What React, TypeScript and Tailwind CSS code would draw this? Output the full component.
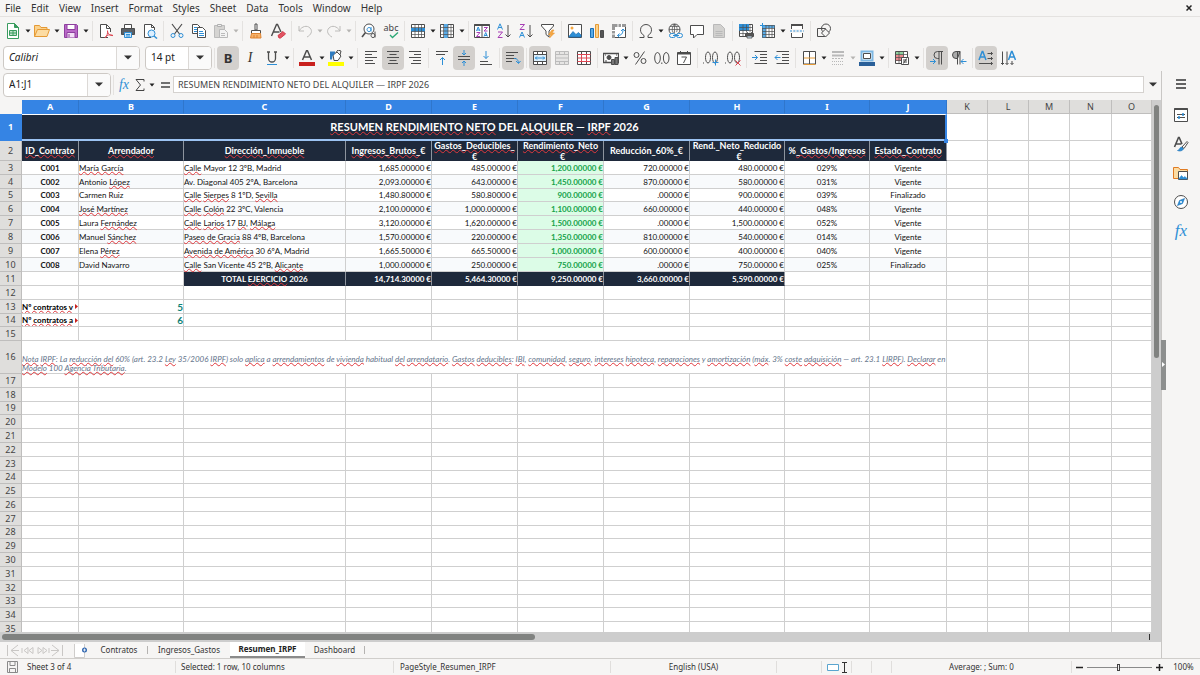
import type { ReactNode } from "react";

const ink = "#4d4d4d";
const blue = "#2e8fd6";

type IconProps = { children: ReactNode; w?: number };

function Svg({ children, w = 16 }: IconProps) {
  return (
    <svg width={w} height="16" viewBox={`0 0 ${w} 16`} fill="none" stroke={ink} strokeWidth="1" aria-hidden="true" className="shrink-0">
      {children}
    </svg>
  );
}

const icons: Record<string, ReactNode> = {
  newDoc: (
    <Svg>
      <path d="M2.5.5h7l4 4v11h-11z" fill="#fff" stroke="#3a9c5f" />
      <path d="M9.5.5v4h4z" fill="#3a9c5f" stroke="#3a9c5f" />
      <path d="M4.5 7.5h7v5h-7zM4.5 10h7M8 7.5v5" stroke="#3a9c5f" fill="#bfe3cb" />
    </Svg>
  ),
  open: (
    <Svg>
      <path d="M.5 13.500v-11h5l1.5 2h6v2" fill="#fbd28c" stroke="#e59a35" />
      <path d="M.5 13.500l3-7h12l-2.500 7z" fill="#fcdca3" stroke="#e59a35" />
    </Svg>
  ),
  save: (
    <Svg>
      <path d="M1.5 1.5h12l1 1v12h-13z" fill="#b968c7" stroke="#8e3f9e" />
      <path d="M4 1.5h8v5H4z" fill="#fff" stroke="#8e3f9e" />
      <path d="M4 14.5v-5h8v5" fill="#f3dff6" stroke="#8e3f9e" />
      <path d="M6 11v3" stroke="#8e3f9e" />
    </Svg>
  ),
  pdf: (
    <Svg>
      <path d="M10 14.5H2.5v-13h6l4 4V9" fill="#fff" />
      <path d="M8.5 1.5v4h4" />
      <path d="M7 15c2-2 3-5 2.5-7.500M9.5 8c0 3 3 5 5.500 4.500M7 15c1-3 5-4 8-2.500" stroke="#dd4652" />
    </Svg>
  ),
  print: (
    <Svg>
      <path d="M4.5 6V1.5h7V6" fill="#fff" />
      <path d="M1.5 5.500h13v6h-13z" fill="#5a6066" />
      <path d="M4.5 9.5h7v5h-7z" fill="#cfe6f7" stroke={blue} />
      <path d="M6 11.500h4M6 13h4" stroke={blue} />
    </Svg>
  ),
  preview: (
    <Svg>
      <path d="M9 14.5H2.5v-13h7l3 3V7" fill="#fff" />
      <path d="M9.5 1.5v3h3" />
      <circle cx="9.5" cy="10.5" r="3.5" fill="#dcefff" stroke={blue} />
      <path d="M12 13l3 2.5" stroke={blue} strokeWidth="1.5" />
    </Svg>
  ),
  cut: (
    <Svg>
      <path d="M3 1l7.5 10M13 1L5.5 11" strokeWidth="1.2" />
      <circle cx="4" cy="12.5" r="2" stroke={blue} />
      <circle cx="12" cy="12.5" r="2" stroke={blue} />
    </Svg>
  ),
  copy: (
    <Svg>
      <path d="M1.5 1.5h5l3 3v6h-8z" fill="#fff" />
      <path d="M3 4.5h3M3 6.5h3M3 8.5h3" stroke={blue} />
      <path d="M6.5 4.5h5l3 3v7h-8z" fill="#fff" />
      <path d="M8 8.5h4M8 10.5h5M8 12.5h5" stroke={blue} />
    </Svg>
  ),
  paste: (
    <Svg>
      <path d="M1.5 2.5h10v12h-10z" fill="#d5d4d2" stroke="#bbb" />
      <path d="M4.5 1.5h4v2h-4z" fill="#eee" stroke="#b0b0b0" />
      <path d="M6.5 6.5h5l3 3v5h-8z" fill="#f3f3f3" stroke="#b9b9b9" />
      <path d="M8 10.5h4M8 12.5h4" stroke="#bbb" />
    </Svg>
  ),
  clone: (
    <Svg>
      <path d="M7 1h2v6H7z" fill="#fff" />
      <path d="M3.5 7.5h9v3h-9z" fill="#fff" />
      <path d="M3.5 10.5h9l.5 4.5H2.5z" fill="#f6b26b" stroke="#df8330" />
      <path d="M6 12v3M9 12v3" stroke="#df8330" />
    </Svg>
  ),
  clear: (
    <Svg>
      <path d="M1.5 13L6.5 1.5h1L11 9M3.5 9h6" strokeWidth="1.4" />
      <path d="M8 12.5l5-4 2.5 2.5-5 4H9z" fill="#e25563" stroke="#d23b4b" />
    </Svg>
  ),
  undo: (
    <Svg>
      <path d="M2 3v5h5M2 8c3-5 8-6 11-3s1 7-3 9" stroke="#bdbcba" />
    </Svg>
  ),
  redo: (
    <Svg>
      <path d="M14 3v5H9M14 8C11 3 6 2 3 5s-1 7 3 9" stroke="#bdbcba" />
    </Svg>
  ),
  find: (
    <Svg>
      <circle cx="8" cy="6" r="5" fill="#fff" />
      <path d="M4.5 9.5L1 14" strokeWidth="1.6" />
      <path d="M10 4v4.5M10 6.5a2 2 0 1 0 0 .1" stroke={blue} />
      <path d="M14 8.5v6M14 12.5a2 2 0 1 0 0 .1" />
    </Svg>
  ),
  rows: (
    <Svg>
      <path d="M1.5 1.5h13v13h-13z" fill="#fff" />
      <path d="M1 5h14v3.5H1z" fill={blue} stroke="none" />
      <path d="M1.5 4.5h13M1.5 8.5h13M1.5 11.5h13M5 1.5v13M8.5 1.5v13M11.5 1.5v13" strokeWidth=".7" />
    </Svg>
  ),
  cols: (
    <Svg>
      <path d="M1.5 1.5h13v13h-13z" fill="#fff" />
      <path d="M5 1h4v14H5z" fill="#5aabe6" stroke="none" />
      <path d="M1.5 4.5h13M1.5 8h13M1.5 11.5h13M4.5 1.5v13M9 1.5v13M12 1.5v13" strokeWidth=".7" />
    </Svg>
  ),
  sort: (
    <Svg>
      <path d="M.5 1.5h15v13H.5zM8 1.5v13" fill="#fff" />
      <path d="M.5 2h15" strokeWidth="2" />
      <path d="M2.5 8l1.7-4 1.7 4M3 7h2.4M10 13.5l1.7-4 1.7 4M10.5 12.5H13" stroke={blue} />
      <path d="M2.5 9.5h3.5l-3.5 4H6M10 4.5h3.5L10 8h3.5" stroke="#a73fb5" />
    </Svg>
  ),
  sortAsc: (
    <Svg>
      <path d="M1.5 6.5L4 .8l2.5 5.7M2.3 4.5h3.4" stroke={blue} />
      <path d="M2 9h4.5L2 14.5h4.5" stroke="#a73fb5" />
      <path d="M12 2v12M9.5 11.5L12 14l2.5-2.5" />
    </Svg>
  ),
  sortDesc: (
    <Svg>
      <path d="M2 1.5h4.5L2 6.5h4.5" stroke="#a73fb5" />
      <path d="M1.5 14.5L4 9l2.5 5.5M2.3 12.5h3.4" stroke={blue} />
      <path d="M12 2v12M9.5 11.5L12 14l2.5-2.5" />
    </Svg>
  ),
  filter: (
    <Svg>
      <path d="M1.5 1.5h12V3L9 8v6l-3-2.5V8L1.5 3z" fill="#fff" />
      <path d="M12 7l-3.5 4.5H11L9.5 15l5-5H12l2-3z" fill="#f5a742" stroke="#e9962f" strokeWidth=".6" />
    </Svg>
  ),
  image: (
    <Svg>
      <path d="M1.5 1.5h13v13h-13z" fill="#fff" />
      <path d="M2 13.500l4-5 3 3 2.500-2L14 12v2H2z" fill={blue} stroke="#1a6fb5" strokeWidth=".7" />
      <circle cx="5" cy="5" r="1.5" fill="#f5a742" stroke="none" />
    </Svg>
  ),
  chart: (
    <Svg>
      <path d="M1.5 5.5h3v9h-3z" fill="#5aabe6" stroke="#1a6fb5" />
      <path d="M6.5 1.5h3v13h-3z" fill="#fbd28c" stroke="#e59a35" />
      <path d="M11.5 7.5h3v7h-3z" fill="#555" />
    </Svg>
  ),
  pivot: (
    <Svg>
      <path d="M1.5 1.5h13v13h-13z" fill="#fff" />
      <path d="M1 1h14v3H1zM1 4h3v11H1z" fill="#999" stroke="none" />
      <path d="M7 1v3M10.5 1v3M1 7.5h3M1 11h3" stroke="#fff" />
      <path d="M6.5 12.5c4 0 5.5-2 5.5-6M10 8l2-2 2 2M8.5 10.5l-2 2 2 2" stroke={blue} />
    </Svg>
  ),
  omega: (
    <Svg>
      <path d="M1.5 14.5H6v-2C3.5 11 2.5 9 2.5 6.8 2.5 3.7 5 1.5 8 1.5s5.5 2.200 5.500 5.300C13.5 9 12.5 11 10 12.500v2h4.500" />
    </Svg>
  ),
  link: (
    <Svg>
      <circle cx="7.5" cy="6.5" r="5.5" />
      <path d="M2 6.5h11M7.5 1v9M3 3.5h9M7.5 1c-3 3-3 8 0 10M7.5 1c3 3 3 6 2 8" strokeWidth=".7" />
      <rect x="2.5" y="10.5" width="6" height="4" rx="2" fill="#f6f5f4" stroke={blue} />
      <rect x="9.5" y="10.5" width="6" height="4" rx="2" fill="#f6f5f4" stroke={blue} />
      <path d="M6 12.5h6" stroke={blue} />
    </Svg>
  ),
  comment: (
    <Svg>
      <path d="M1.5 2.5h13v9H8L4.5 15v-3.5h-3z" fill="#fff" />
    </Svg>
  ),
  header: (
    <Svg>
      <path d="M2.5 1.5h7l4 4v9h-11z" fill="#d2d1cf" stroke="#b9b9b9" />
      <path d="M4.5 8.5h7M4.5 10.5h7M4.5 12.5h7" stroke="#b9b9b9" />
    </Svg>
  ),
  printArea: (
    <Svg>
      <path d="M1.5 1.5h13v12h-13z" fill="#fff" />
      <path d="M1 1h10v7H1z" fill={blue} stroke="none" />
      <path d="M1.5 4.5h13M1.5 7.5h13M1.5 10.5h6M5 1.5v12M8.5 1.5v8M12 1.5v8" strokeWidth=".7" />
      <path d="M7.5 10.5h8v3h-8z" fill="#555" />
      <path d="M9.5 9v2M13.5 9v2M9 13h5v2H9z" fill="#cfe6f7" strokeWidth=".8" />
    </Svg>
  ),
  freeze: (
    <Svg>
      <path d="M2.5 2.5h12v12h-12z" fill="#fff" />
      <path d="M2 2h13v3H2zM2 5h4v10H2z" fill="#5aabe6" stroke="none" />
      <path d="M2.5 5.5h12M2.5 8.5h12M2.5 11.5h12M6 2.5v12M9 2.5v12M12 2.5v12M2.5 2.5h12v12h-12z" strokeWidth=".7" />
      <path d="M2.5 0v5M0 2.5h5" stroke={blue} />
    </Svg>
  ),
  split: (
    <Svg>
      <path d="M2.5 6V1.5h11V6M2.5 10v4.5h11V10" fill="#fff" />
      <path d="M2 2h12" strokeWidth="2" />
      <path d="M1 8h14" stroke={blue} strokeDasharray="2 1.3" />
    </Svg>
  ),
  shapes: (
    <Svg>
      <circle cx="10" cy="5.5" r="4.5" />
      <path d="M1.5 5.5h8v8h-8z" />
      <path d="M9.5 6l4 4-4 4-4-4z" fill="#f6f5f4" />
    </Svg>
  ),
  bold: <span className="font-['Noto_Sans'] text-[13px] leading-4 font-bold text-[#333]">B</span>,
  italic: <span className="font-['Liberation_Serif'] text-[14px] leading-4 text-[#333] italic">I</span>,
  underline: (
    <Svg>
      <path d="M4.5 2v6.500a3.500 3.500 0 0 0 7 0V2M3 2h3M10 2h3" strokeWidth="1.3" />
      <path d="M3 14.5h10" stroke={blue} />
    </Svg>
  ),
  fontColor: (
    <Svg>
      <path d="M3.5 10L7.500.8h1L12.500 10M5 7h6" strokeWidth="1.5" />
      <path d="M0 12h16v4H0z" fill="#c9211e" stroke="none" />
    </Svg>
  ),
  highlight: (
    <Svg>
      <path d="M5 5l4-3 4 4-3 4.500H6z" fill="#fff" />
      <path d="M8 2.500L10 0l3 1-1 4" />
      <path d="M2 1.500h5v2L4.500 6l-.5 3.500H2z" fill="#2f7cc0" stroke="none" />
      <path d="M0 12h16v4H0z" fill="#ff0" stroke="none" />
    </Svg>
  ),
  left: (
    <Svg>
      <path d="M2 1.500h12M2 4.500h7M2 7.500h12M2 10.500h8M2 13.500h10" />
    </Svg>
  ),
  center: (
    <Svg>
      <path d="M2 1.500h12M4.500 4.500h7M2 7.500h12M4.500 10.500h7M3 13.500h10" />
    </Svg>
  ),
  right: (
    <Svg>
      <path d="M2 1.500h12M7 4.500h7M2 7.500h12M6 10.500h8M4 13.500h10" />
    </Svg>
  ),
  top: (
    <Svg>
      <path d="M2 1.500h12M2 4.500h9" />
      <path d="M8.500 15V7.500M6 10l2.500-2.500L11 10" stroke={blue} />
    </Svg>
  ),
  middle: (
    <Svg>
      <path d="M2 6.500h12M2 9.500h12" />
      <path d="M8 0v5M6 3l2 2 2-2M8 16v-5M6 13l2-2 2 2" stroke={blue} />
    </Svg>
  ),
  bottom: (
    <Svg>
      <path d="M2 11.500h8M2 14.500h12" />
      <path d="M8 1v7.500M5.500 6L8 8.500 10.500 6" stroke={blue} />
    </Svg>
  ),
  wrap: (
    <Svg>
      <path d="M1 2.500h12M1 5.500h8M1 8.500h10M1 11.500h6" />
      <path d="M9 8.500c3 0 4 1 4.500 4.500M11 11l2.500 2.500L15.500 11" stroke={blue} />
    </Svg>
  ),
  mergeCenter: (
    <Svg>
      <path d="M1.500 1.500h13v13h-13zM1.500 4.500h13M1.500 11.500h13M5.500 1.500v3M10.500 1.500v3M5.500 11.500v3M10.500 11.500v3" fill="#fff" />
      <path d="M2 5h12v6H2z" fill="#dbeefb" stroke="none" />
      <path d="M3 8h10M5 6.500L3.500 8 5 9.500M11 6.500L12.500 8 11 9.500" stroke={blue} />
    </Svg>
  ),
  merge: (
    <Svg>
      <path
        d="M1.500 1.500h13v13h-13zM1.500 4.500h13M1.500 8h13M1.500 11.500h13M5.500 1.500v3M10.500 1.500v3M5.500 11.500v3M10.500 11.500v3"
        stroke="#bcbcbc"
        fill="#e6e5e4"
      />
    </Svg>
  ),
  unmerge: (
    <Svg>
      <path d="M1.500 1.500h13v13h-13zM5.500 1.500v3M10.500 1.500v3M5.500 11.500v3M10.500 11.500v3" fill="#fff" />
      <path d="M1.500 4.500h13M1.500 8h13M1.500 11.500h13M5.500 4.500v7M10.500 4.500v7" stroke="#dd4652" />
    </Svg>
  ),
  currency: (
    <Svg>
      <path d="M.5 3.500h15v9H.5z" fill="#fff" strokeWidth="1.3" />
      <circle cx="6" cy="7.5" r="2" fill={ink} />
      <path d="M8.500 9.500h3v5h-3zM12 7.500h3v7h-3z" fill="#777" />
      <path d="M2 5h1M13 5h1M2 11h2" />
    </Svg>
  ),
  percent: (
    <Svg>
      <circle cx="4.5" cy="5" r="2.5" />
      <circle cx="11.5" cy="11" r="2.5" />
      <path d="M12.500 1.500l-9 13" />
    </Svg>
  ),
  number: (
    <Svg>
      <ellipse cx="3.5" cy="8" rx="2.8" ry="5.5" />
      <ellipse cx="12.2" cy="8" rx="2.8" ry="5.5" />
      <path d="M7.800 12.500v1.500" />
    </Svg>
  ),
  date: (
    <Svg>
      <path d="M1.500 2.500h13v12h-13z" fill="#fff" />
      <path d="M1.500 3.500h13" strokeWidth="2" />
      <path d="M4.500 1v2M11.500 1v2M5.500 7h5l-3 6" />
    </Svg>
  ),
  addDecimal: (
    <Svg>
      <path d="M.5 12.500v1" />
      <ellipse cx="5" cy="7.5" rx="2.5" ry="5.5" />
      <ellipse cx="12" cy="7.5" rx="2.5" ry="5.5" />
      <path d="M12.500 9.500v6M9.500 12.500h6" stroke={blue} />
    </Svg>
  ),
  delDecimal: (
    <Svg>
      <path d="M.5 12.500v1" />
      <ellipse cx="5" cy="7.5" rx="2.5" ry="5.5" />
      <ellipse cx="12" cy="7.5" rx="2.5" ry="5.5" />
      <path d="M10.500 10.500l5 5M15.500 10.500l-5 5" stroke="#dd4652" />
    </Svg>
  ),
  indent: (
    <Svg>
      <path d="M2.500 1.500H15M8 4.500h7M8 7.500h7M8 10.500h7M2.500 13.500H15" />
      <path d="M0 7.500h5.500M3 5l2.500 2.500L3 10" stroke={blue} />
    </Svg>
  ),
  outdent: (
    <Svg>
      <path d="M2.500 1.500H15M8 4.500h7M8 7.500h7M8 10.500h7M2.500 13.500H15" />
      <path d="M6.500 7.500H1M3.500 5L1 7.500 3.500 10" stroke={blue} />
    </Svg>
  ),
  borders: (
    <Svg>
      <path d="M2.500 14.500h12" stroke="#e59a35" />
      <path d="M2.500 1.500h12v12.500h-12zM8.500 1.500v12.500" fill="#fff" />
      <path d="M3 8h11M3 14.500h11" stroke="#e59a35" />
    </Svg>
  ),
  lineStyle: (
    <Svg>
      <path d="M2 2h12M2 5.500h12" stroke="#b9b9b9" strokeWidth="2" />
      <path d="M2 8.500h12" stroke="#b9b9b9" strokeDasharray="2 1" />
      <path d="M2 11.500h12M2 14.500h12" stroke="#b9b9b9" strokeDasharray="1 1" />
    </Svg>
  ),
  borderColor: (
    <Svg>
      <path d="M2.500 1.500h11v9h-11z" fill="#fff" stroke="#7db8e4" strokeWidth="2" />
      <path d="M4.500 3.500h7v5h-7z" />
      <path d="M0 12h16v4H0z" fill="#2a6099" stroke="none" />
    </Svg>
  ),
  conditional: (
    <Svg>
      <path d="M1.500 1.500h12v12h-12z" fill="#fff" />
      <path d="M2 2h8v3H2z" fill="#8fd19e" stroke="none" />
      <path d="M2 5h8v6H2z" fill="#ee8a8f" stroke="none" />
      <path d="M1.500 4.500h12M1.500 7.500h12M1.500 10.500h12M5 1.500v12M9.500 1.500v12" strokeWidth=".7" />
      <path d="M7.500 7.500h7v7h-7z" fill="#fff" />
      <path d="M9 10h4M9 12h4M12.500 8.500l-3 5" />
    </Svg>
  ),
  ltr: (
    <Svg>
      <path d="M14 1.500H8.500a3.500 3.500 0 0 0 0 7H10M10 1.500v13M12.500 1.500v13" />
      <path d="M1 11.500h5.500M4 9l2.500 2.500L4 14" stroke={blue} />
    </Svg>
  ),
  rtl: (
    <Svg>
      <path d="M9 1.500H5a3.500 3.500 0 0 0 0 7h1.500z" fill="#aaa" />
      <path d="M6.500 1.500v13M9 1.500v13" />
      <path d="M15.500 11.500H10M12.500 9L10 11.500l2.500 2.500" stroke={blue} />
    </Svg>
  ),
  horizontal: (
    <Svg>
      <path d="M1 10L4.200 1.500h.6L8 10M2 7h5" stroke={blue} strokeWidth="1.5" />
      <path d="M9.500 3.500h5M13 2l1.500 1.500L13 5M9.500 8.500h5M13 7l1.500 1.500L13 10M1 13.500h13.500M13 12l1.500 1.500L13 15" />
    </Svg>
  ),
  vertical: (
    <Svg>
      <path d="M8.500 10l3-8.500h.6L15.500 10M9.500 7h5" stroke={blue} strokeWidth="1.5" />
      <path d="M2.500 1.500v13M1 13l1.500 1.500L4 13M7 1.500v13M5.500 13L7 14.500 8.500 13M12 11v3.500M10.500 13l1.500 1.500 1.500-1.500" />
    </Svg>
  ),
  menu: (
    <Svg>
      <path d="M3 4h10M3 8h10M3 12h10" stroke="#333" strokeWidth="1.5" />
    </Svg>
  ),
  properties: (
    <Svg>
      <path d="M1.500 1.500h13v13h-13z" fill="#fff" />
      <path d="M1.500 2h13" strokeWidth="2" />
      <path d="M4 7.500h8M4 10.500h8" />
      <path d="M10 6v3M6 9v3" stroke={blue} strokeWidth="1.5" />
    </Svg>
  ),
  styles: (
    <Svg>
      <path d="M1.500 11L5.500 1.500h.7L9 8M3 8h5.500" strokeWidth="1.6" />
      <path d="M9 11l5-5.500 1 1-4 6z" fill="#fff" />
      <path d="M4.500 14.500c2 0 2-3 4-3.500l2 2c-1 2-4 2.500-6 1.500z" fill={blue} stroke="#1a6fb5" strokeWidth=".6" />
    </Svg>
  ),
  gallery: (
    <Svg>
      <path d="M.5 13.500v-11h5l1.500 2h7.500v9z" fill="#fcdca3" stroke="#e07b22" />
      <path d="M5.500 6.500h9v8h-9z" fill="#fff" />
      <path d="M6 13.500l2.500-3 2 2 1.500-1 2 2v.5H6z" fill={blue} stroke={blue} strokeWidth=".5" />
    </Svg>
  ),
  navigator: (
    <Svg>
      <circle cx="8" cy="8" r="6.5" fill="#fff" />
      <path d="M11.500 4.500L9.500 9.500l-5 2 2-5z" fill={blue} stroke="#1a6fb5" strokeWidth=".6" />
      <circle cx="8" cy="8" r="1" fill="#fff" stroke="none" />
    </Svg>
  ),
};

icons.spelling = (
  <span className="relative block h-4 w-4 text-center font-['Noto_Sans'] text-[9px] leading-[9px] text-[#444]">
    <span className="-mx-1 block">abc</span>
    <svg width="10" height="7" viewBox="0 0 10 7" fill="none" stroke="#2aa876" strokeWidth="1.3" className="absolute right-0 bottom-0" aria-hidden="true">
      <path d="M1 3l2.500 2.500L9 .5" />
    </svg>
  </span>
);

function Caret({ faded = false }: { faded?: boolean }) {
  return (
    <svg width="6" height="4" viewBox="0 0 6 4" aria-hidden="true" className={faded ? "text-[#b5b4b2]" : "text-[#222]"}>
      <path d="M.5.5h5L3 3.500z" fill="currentColor" />
    </svg>
  );
}

function Tool({ id, label, active = false }: { id: string; label: string; active?: boolean }) {
  return (
    <button
      type="button"
      aria-label={label}
      aria-pressed={active}
      className={`flex h-6 w-[22px] shrink-0 items-center justify-center rounded ${active ? "bg-[#d3d0cd]" : ""}`}
    >
      {icons[id]}
    </button>
  );
}

function Drop({ label, faded }: { label: string; faded?: boolean }) {
  return (
    <button type="button" aria-label={`${label} options`} className="flex h-6 w-[7px] shrink-0 items-center justify-end">
      <Caret faded={faded} />
    </button>
  );
}

type ToolDef = { id: string; label: string; active?: boolean; drop?: boolean; faded?: boolean };

function Toolbar({ groups }: { groups: ToolDef[][] }) {
  return (
    <>
      {groups.map((group, i) => (
        <div key={i} className="flex shrink-0 items-center">
          {i > 0 && (
            <span className="flex w-[5px] justify-center">
              <span className="h-5 w-px bg-[#e4e2e0]" />
            </span>
          )}
          {group.map((t) => (
            <div key={t.id} className="flex items-center">
              <Tool id={t.id} label={t.label} active={t.active} />
              {t.drop && <Drop label={t.label} faded={t.faded} />}
            </div>
          ))}
          {group[group.length - 1].drop && <span className="w-px" />}
        </div>
      ))}
    </>
  );
}

const standardTools: ToolDef[][] = [
  [
    { id: "newDoc", label: "New", drop: true },
    { id: "open", label: "Open", drop: true },
    { id: "save", label: "Save", drop: true },
  ],
  [
    { id: "pdf", label: "Export as PDF" },
    { id: "print", label: "Print" },
    { id: "preview", label: "Print Preview" },
  ],
  [
    { id: "cut", label: "Cut" },
    { id: "copy", label: "Copy" },
    { id: "paste", label: "Paste", drop: true, faded: true },
  ],
  [
    { id: "clone", label: "Clone Formatting" },
    { id: "clear", label: "Clear Formatting" },
  ],
  [
    { id: "undo", label: "Undo", drop: true, faded: true },
    { id: "redo", label: "Redo", drop: true, faded: true },
  ],
  [
    { id: "find", label: "Find and Replace" },
    { id: "spelling", label: "Spelling" },
  ],
  [
    { id: "rows", label: "Row", drop: true },
    { id: "cols", label: "Column", drop: true },
  ],
  [
    { id: "sort", label: "Sort" },
    { id: "sortAsc", label: "Sort Ascending" },
    { id: "sortDesc", label: "Sort Descending" },
    { id: "filter", label: "AutoFilter" },
  ],
  [
    { id: "image", label: "Insert Image" },
    { id: "chart", label: "Insert Chart" },
    { id: "pivot", label: "Pivot Table" },
  ],
  [
    { id: "omega", label: "Special Character", drop: true },
    { id: "link", label: "Hyperlink" },
    { id: "comment", label: "Comment" },
    { id: "header", label: "Headers and Footers" },
  ],
  [
    { id: "printArea", label: "Define Print Area" },
    { id: "freeze", label: "Freeze Rows and Columns", drop: true },
    { id: "split", label: "Split Window" },
  ],
  [{ id: "shapes", label: "Show Draw Functions" }],
];

const formatTools: ToolDef[][] = [
  [
    { id: "bold", label: "Bold", active: true },
    { id: "italic", label: "Italic" },
    { id: "underline", label: "Underline", drop: true },
  ],
  [
    { id: "fontColor", label: "Font Color", drop: true },
    { id: "highlight", label: "Background Color", drop: true },
  ],
  [
    { id: "left", label: "Align Left" },
    { id: "center", label: "Center Horizontally", active: true },
    { id: "right", label: "Align Right" },
  ],
  [
    { id: "top", label: "Align Top" },
    { id: "middle", label: "Center Vertically", active: true },
    { id: "bottom", label: "Align Bottom" },
  ],
  [{ id: "wrap", label: "Wrap Text", active: true }],
  [
    { id: "mergeCenter", label: "Merge and Center", active: true },
    { id: "merge", label: "Merge Cells" },
    { id: "unmerge", label: "Unmerge Cells" },
  ],
  [
    { id: "currency", label: "Format as Currency", drop: true },
    { id: "percent", label: "Format as Percent" },
    { id: "number", label: "Format as Number" },
    { id: "date", label: "Format as Date" },
  ],
  [
    { id: "addDecimal", label: "Add Decimal Place" },
    { id: "delDecimal", label: "Delete Decimal Place" },
  ],
  [
    { id: "indent", label: "Increase Indent" },
    { id: "outdent", label: "Decrease Indent" },
  ],
  [
    { id: "borders", label: "Borders", drop: true },
    { id: "lineStyle", label: "Border Style", drop: true, faded: true },
    { id: "borderColor", label: "Border Color", drop: true },
  ],
  [{ id: "conditional", label: "Conditional Formatting", drop: true }],
  [
    { id: "ltr", label: "Left-To-Right", active: true },
    { id: "rtl", label: "Right-To-Left" },
  ],
  [
    { id: "horizontal", label: "Text direction from left to right", active: true },
    { id: "vertical", label: "Text direction from top to bottom" },
  ],
];

function Combo({ label, value, inputClass }: { label: string; value: string; inputClass: string }) {
  return (
    <div className="flex h-6 shrink-0 overflow-hidden rounded border border-[#cdc9c5] bg-white">
      <input aria-label={label} defaultValue={value} className={`border-r border-[#dcd9d6] px-[5px] text-[10px] text-[#222] outline-none ${inputClass}`} />
      <button type="button" aria-label={`${label} list`} className="flex w-[22px] items-center justify-center bg-[#fafafa]">
        <svg width="8" height="5" viewBox="0 0 8 5" aria-hidden="true">
          <path d="M0 .5h8L4 4.500z" fill="#333" />
        </svg>
      </button>
    </div>
  );
}

/* Text between pipes is flagged by the spell checker. */
function Spell({ text }: { text: string }) {
  return (
    <>
      {text.split("|").map((part, i) =>
        i % 2 ? (
          <span key={i} className="underline decoration-[#e0383d] decoration-wavy decoration-1 underline-offset-0 [text-decoration-skip-ink:none]">
            {part}
          </span>
        ) : (
          part
        ),
      )}
    </>
  );
}

const letters = "ABCDEFGHIJKLMNO".split("");

const headings = [
  "|ID_Contrato|",
  "|Arrendador|",
  "|Dirección_Inmueble|",
  "|Ingresos_Brutos_|€",
  "|Gastos_Deducibles_|\n€",
  "|Rendimiento_Neto|\n|_|€",
  "Reducción_60%_€",
  "Rend._Neto_Reducido\n_€",
  "%|_Gastos/Ingresos|",
  "|Estado_Contrato|",
];

const contracts = [
  ["C001", "|María García|", "|Calle| Mayor 12 3ºB, Madrid", "1,685.00000 €", "485.00000 €", "1,200.00000 €", "720.00000 €", "480.00000 €", "029%", "Vigente"],
  ["C002", "Antonio |López|", "Av. Diagonal 405 2ºA, Barcelona", "2,093.00000 €", "643.00000 €", "1,450.00000 €", "870.00000 €", "580.00000 €", "031%", "Vigente"],
  ["C003", "Carmen Ruiz", "|Calle| |Sierpes| 8 1ºD, |Sevilla|", "1,480.80000 €", "580.80000 €", "900.00000 €", ".00000 €", "900.00000 €", "039%", "Finalizado"],
  ["C004", "|José Martínez|", "|Calle| |Colón| 22 3ºC, Valencia", "2,100.00000 €", "1,000.00000 €", "1,100.00000 €", "660.00000 €", "440.00000 €", "048%", "Vigente"],
  ["C005", "Laura |Fernández|", "|Calle| |Larios| 17 |BJ|, |Málaga|", "3,120.00000 €", "1,620.00000 €", "1,500.00000 €", ".00000 €", "1,500.00000 €", "052%", "Vigente"],
  ["C006", "Manuel |Sánchez|", "|Paseo de Gracia| 88 4ºB, Barcelona", "1,570.00000 €", "220.00000 €", "1,350.00000 €", "810.00000 €", "540.00000 €", "014%", "Vigente"],
  ["C007", "Elena |Pérez|", "|Avenida de América| 30 6ºA, Madrid", "1,665.50000 €", "665.50000 €", "1,000.00000 €", "600.00000 €", "400.00000 €", "040%", "Vigente"],
  ["C008", "David Navarro", "|Calle| San Vicente 45 2ºB, |Alicante|", "1,000.00000 €", "250.00000 €", "750.00000 €", ".00000 €", "750.00000 €", "025%", "Finalizado"],
];

const totals = ["TOTAL |EJERCICIO| 2026", "14,714.30000 €", "5,464.30000 €", "9,250.00000 €", "3,660.00000 €", "5,590.00000 €"];

const note =
  "|Nota| |IRPF|: La |reducción| |del| 60% (art. 23.2 |Ley| 35/2006 |IRPF|) solo |aplica| a |arrendamientos| de |vivienda| habitual |del| |arrendatario|. |Gastos| |deducibles|: |IBI|, |comunidad|, |seguro|, |intereses| |hipoteca|, |reparaciones| y |amortización| (|máx|. 3% |coste| |adquisición| — art. 23.1 |LIRPF|). |Declarar| en\n|Modelo| 100 |Agencia Tributaria|.";

const shortRows = new Set([5, 14, 19, 24, 28, 33]);

const grid = "border-r border-b border-[#cfcfcf]";
const darkCell = "border-r border-b border-r-[#8d949e] border-b-[#1e293b] bg-[#1e293b] font-bold text-white";

function RowHead({ n }: { n: number }) {
  return (
    <th
      scope="row"
      className={`border-r border-b text-center font-['Noto_Sans'] text-[9px] leading-3 ${
        n === 1 ? "border-[#3584e4] bg-[#3584e4] font-bold text-white" : "border-[#bfbebd] bg-[#dfdedc] font-normal text-[#444]"
      }`}
    >
      {n}
    </th>
  );
}

function Blank({ from, to = 15 }: { from: number; to?: number }) {
  return (
    <>
      {letters.slice(from, to).map((l) => (
        <td key={l} className={grid} />
      ))}
    </>
  );
}

function alignFor(col: number) {
  if (col === 0 || col >= 8) return "text-center";
  return col < 3 ? "text-left" : "text-right";
}

function Row({ n }: { n: number }) {
  const h = n === 1 ? "h-[27px]" : n === 2 ? "h-[20px]" : n === 16 ? "h-[33px]" : shortRows.has(n) ? "h-[13px]" : "h-[14px]";
  let cells: ReactNode = <Blank from={0} />;

  if (n === 1) {
    cells = (
      <>
        <td colSpan={10} className="relative bg-[#1e293b] pb-0.5 text-center text-[11px] leading-[16px] font-bold text-white">
          <Spell text="|RESUMEN| |RENDIMIENTO| |NETO| DEL |ALQUILER| — |IRPF| 2026" />
          <span className="absolute inset-0 border-t border-r-2 border-b-2 border-t-white border-r-[#3584e4] border-b-[#9cc3f2]" />
          <span className="absolute -right-px -bottom-0.5 h-1 w-1 bg-[#3584e4]" />
        </td>
        <Blank from={10} />
      </>
    );
  } else if (n === 2) {
    cells = (
      <>
        {headings.map((t) => (
          <td key={t} className={`${darkCell} text-center text-[9px] leading-[11px]`}>
            <div className="flex h-[19px] items-center justify-center overflow-hidden whitespace-pre">
              <span>
                <Spell text={t} />
              </span>
            </div>
          </td>
        ))}
        <Blank from={10} />
      </>
    );
  } else if (n <= 10) {
    cells = (
      <>
        {contracts[n - 3].map((t, i) => (
          <td
            key={i}
            className={`${grid} whitespace-nowrap ${alignFor(i)} ${i === 0 || i === 5 ? "font-bold" : ""} ${
              i === 5 ? "bg-[#dcfce7] text-[#16a34a]" : n % 2 ? "" : "bg-[#f8fafc]"
            }`}
          >
            <Spell text={t} />
          </td>
        ))}
        <Blank from={10} />
      </>
    );
  } else if (n === 11) {
    cells = (
      <>
        <Blank from={0} to={2} />
        {totals.map((t, i) => (
          <td key={t} className={`${darkCell} whitespace-nowrap ${i ? "text-right" : "text-center"}`}>
            <Spell text={t} />
          </td>
        ))}
        <Blank from={8} />
      </>
    );
  } else if (n === 13 || n === 14) {
    cells = (
      <>
        <td className={`${grid} relative font-bold text-black`}>
          <div className="overflow-hidden whitespace-nowrap">
            <Spell text={n === 13 ? "|Nº contratos v|" : "|Nº contratos a|"} />
          </div>
          <svg width="3" height="5" viewBox="0 0 3 5" className="absolute top-1 right-0" aria-hidden="true">
            <path d="M0 0l3 2.500L0 5z" fill="#c9211e" />
          </svg>
        </td>
        <td className={`${grid} text-right text-[10px] font-bold text-[#0f8276]`}>{n === 13 ? "5" : "6"}</td>
        <Blank from={2} />
      </>
    );
  } else if (n === 16) {
    cells = (
      <>
        <td colSpan={10} className={`${grid} align-bottom leading-[9px] whitespace-pre text-[#64748b] italic`}>
          <Spell text={note} />
        </td>
        <Blank from={10} />
      </>
    );
  }

  return (
    <tr className={h}>
      <RowHead n={n} />
      {cells}
    </tr>
  );
}

function Sheet() {
  return (
    <table className="w-full table-fixed border-separate border-spacing-0 bg-white font-['Lato',sans-serif] text-[8px] leading-[12px] text-[#111]">
      <colgroup>
        <col className="w-[22px]" />
        <col className="w-[57px]" />
        <col className="w-[105px]" />
        <col className="w-[162px]" />
        <col className="w-[86px]" />
        <col className="w-[86px]" />
        <col className="w-[86px]" />
        <col className="w-[86px]" />
        <col className="w-[95px]" />
        <col className="w-[85px]" />
        <col className="w-[77px]" />
        <col className="w-[41px]" />
        <col className="w-[41px]" />
        <col className="w-[41px]" />
        <col className="w-[42px]" />
        <col />
      </colgroup>
      <thead>
        <tr className="h-[14px]">
          <td className="bg-[#f6f5f4]" />
          {letters.map((l, i) => (
            <th
              key={l}
              scope="col"
              className={`border-r border-b text-center font-['Noto_Sans'] text-[9px] leading-3 ${
                i < 10 ? "border-r-[#2f76cc] border-b-[#3584e4] bg-[#3584e4] font-bold text-white" : "border-[#bfbebd] bg-[#dfdedc] font-normal text-[#444]"
              }`}
            >
              {l}
            </th>
          ))}
        </tr>
      </thead>
      <tbody>
        {Array.from({ length: 35 }, (_, i) => (
          <Row key={i} n={i + 1} />
        ))}
      </tbody>
    </table>
  );
}

function FormulaBar() {
  return (
    <div className="flex h-[29px] shrink-0 items-center pb-0.5 pl-[3px]">
      <Combo label="Name Box" value="A1:J1" inputClass="w-[84px] font-['Noto_Sans']" />
      <span className="ml-0.5 h-5 w-px bg-[#e4e2e0]" />
      <button type="button" aria-label="Function Wizard" className="w-5 text-center font-['Liberation_Serif'] text-[14px] leading-5 text-[#2e8fd6] italic">
        fx
      </button>
      <button type="button" aria-label="Select Function" className="ml-px flex h-5 items-center gap-1">
        <svg width="10" height="12" viewBox="0 0 10 12" fill="none" stroke="#444" aria-hidden="true">
          <path d="M9 2.500v-2H1L5.500 6 1 11.500h8v-2" />
        </svg>
        <Caret />
      </button>
      <button type="button" aria-label="Formula" className="ml-1.5 flex h-5 w-3 items-center">
        <svg width="9" height="6" viewBox="0 0 9 6" stroke="#444" strokeWidth="1.5" aria-hidden="true">
          <path d="M0 1h9M0 5h9" />
        </svg>
      </button>
      <input
        aria-label="Input line"
        defaultValue="RESUMEN RENDIMIENTO NETO DEL ALQUILER — IRPF 2026"
        className="h-[17px] min-w-0 flex-1 border border-[#d5d2cf] bg-white px-1 font-['Noto_Sans'] text-[9px] text-[#444] outline-none"
      />
      <button type="button" aria-label="Expand Formula Bar" className="flex h-5 w-[17px] items-center justify-center">
        <svg width="8" height="5" viewBox="0 0 8 5" aria-hidden="true">
          <path d="M0 .5h8L4 4.500z" fill="#333" />
        </svg>
      </button>
    </div>
  );
}

function TabBar() {
  const nav = "flex h-4 w-[15px] items-center justify-center";
  const divider = "h-2 w-px bg-[#b5b3b1]";
  return (
    <div className="flex h-4 shrink-0 items-center text-[8px] leading-3 text-[#333]">
      <div className="flex pl-[5px] text-[#c9c7c5]">
        {[
          ["First sheet", "M2.500 1v11M13 1L6 6.500l7 5.500M6 6.500h8"],
          ["Previous sheet", "M2 4v5M8 3.500L4 6.500 8 9.500zM13 3.500L9 6.500 13 9.500z"],
          ["Next sheet", "M3 3.500l4 3-4 3zM8 3.500l4 3-4 3zM14 4v5"],
          ["Last sheet", "M12.500 1v11M2 1l7 5.500L2 12M9 6.500H1"],
        ].map(([label, d]) => (
          <button key={label} type="button" aria-label={label} className={nav}>
            <svg width="15" height="13" viewBox="0 0 15 13" fill="none" stroke="currentColor" aria-hidden="true">
              <path d={d} />
            </svg>
          </button>
        ))}
      </div>
      <button type="button" aria-label="Add sheet" className="ml-[9px] flex h-4 w-[14px] items-center">
        <svg width="14" height="15" viewBox="0 0 14 15" aria-hidden="true">
          <path d="M.5 1v13.500h10V1" fill="#fff" stroke="#cfcdcb" />
          <circle cx="10.5" cy="7" r="2.500" fill="#2f66b0" />
          <path d="M10.500 5.500v3M9 7h3" stroke="#fff" strokeWidth=".8" />
        </svg>
      </button>
      <div role="tablist" className="ml-[3px] flex h-4 items-center">
        <button type="button" role="tab" className="flex h-4 w-[56px] items-center justify-center">
          Contratos
        </button>
        <span className={divider} />
        <button type="button" role="tab" className="flex h-4 w-[82px] items-center justify-center">
          Ingresos_Gastos
        </button>
        <button
          type="button"
          role="tab"
          aria-selected="true"
          className="flex h-4 w-[75px] items-center justify-center border-b-2 border-[#8b8b8b] bg-white font-bold text-[#222]"
        >
          Resumen_IRPF
        </button>
        <button type="button" role="tab" className="flex h-4 w-[59px] items-center justify-center">
          Dashboard
        </button>
        <span className={divider} />
      </div>
    </div>
  );
}

function Sidebar() {
  const items = [
    ["properties", "Properties"],
    ["styles", "Styles"],
    ["gallery", "Gallery"],
    ["navigator", "Navigator"],
  ];
  const button = "flex h-6 w-6 items-center justify-center";
  return (
    <aside className="relative flex w-[39px] shrink-0 flex-col items-center gap-[5px] border-l border-[#c9c7c5] pt-px">
      <button type="button" aria-label="Sidebar Settings" className={`${button} mb-0.5`}>
        {icons.menu}
      </button>
      {items.map(([id, label]) => (
        <button key={id} type="button" aria-label={label} className={button}>
          {icons[id]}
        </button>
      ))}
      <button type="button" aria-label="Functions" className="h-6 w-6 text-center font-['Liberation_Serif'] text-[17px] leading-6 text-[#2e8fd6] italic">
        fx
      </button>
      <button
        type="button"
        aria-label="Hide sidebar"
        className="absolute top-1/2 -left-px flex h-[50px] w-[5px] -translate-y-1/2 items-center justify-center bg-[#8d8f8e]"
      >
        <svg width="3" height="5" viewBox="0 0 3 5" aria-hidden="true">
          <path d="M0 0l3 2.500L0 5z" fill="#fff" />
        </svg>
      </button>
    </aside>
  );
}

function StatusBar() {
  const sep = "border-r border-[#e0dedc]";
  return (
    <footer className="flex h-[17px] shrink-0 items-center border-t border-[#d0cecb] text-[8px] leading-3 text-[#333]">
      <div className={`flex h-3 w-[176px] items-center gap-2 pl-1.5 ${sep}`}>
        <svg width="13" height="12" viewBox="0 0 13 12" fill="none" stroke="#8a8a8a" aria-hidden="true">
          <path d="M1.500.5h10v11h-10zM4 .5v4h5v-4M3.500 11.500v-4h6v4" />
        </svg>
        <span>Sheet 3 of 4</span>
      </div>
      <div className={`flex h-3 w-[218px] items-center pl-[5px] ${sep}`}>Selected: 1 row, 10 columns</div>
      <div className={`flex h-3 w-[217px] items-center pl-1.5 ${sep}`}>PageStyle_Resumen_IRPF</div>
      <div className={`flex h-3 min-w-0 flex-1 items-center justify-center ${sep}`}>English (USA)</div>
      <div className={`h-3 w-[45px] ${sep}`} />
      <div className={`flex h-3 w-[30px] items-center justify-center gap-[3px] ${sep}`}>
        <svg width="12" height="7" viewBox="0 0 12 7" aria-hidden="true">
          <path d="M.5.5h11v6H.5z" fill="#fff" stroke="#5aa5cf" />
        </svg>
        <svg width="5" height="11" viewBox="0 0 5 11" stroke="#333" aria-hidden="true">
          <path d="M0 .5h5M2.500 0v11M0 10.500h5" />
        </svg>
      </div>
      <div className={`h-3 w-5 ${sep}`} />
      <div className={`h-3 w-5 ${sep}`} />
      <div className={`flex h-3 w-[180px] items-center justify-center ${sep}`}>Average: ; Sum: 0</div>
      <div className="flex h-3 w-[95px] items-center justify-center gap-1">
        <button type="button" aria-label="Zoom Out" className="flex h-3 w-[7px] items-center">
          <svg width="7" height="7" viewBox="0 0 7 7" stroke="#222" strokeWidth="1.5" aria-hidden="true">
            <path d="M0 3.500h7" />
          </svg>
        </button>
        <div className="relative flex h-3 w-[65px] items-center">
          <span className="h-px w-full bg-[#8a8a8a]" />
          <input type="range" aria-label="Zoom" min="20" max="600" defaultValue="100" className="absolute inset-0 w-full opacity-0" />
          <span className="pointer-events-none absolute top-[3px] left-[30px] h-[7px] w-[3px] border border-[#444] bg-[#eee]" />
        </div>
        <button type="button" aria-label="Zoom In" className="flex h-3 w-[7px] items-center">
          <svg width="7" height="7" viewBox="0 0 7 7" stroke="#222" strokeWidth="1.5" aria-hidden="true">
            <path d="M3.500 0v7M0 3.500h7" />
          </svg>
        </button>
      </div>
      <div className="w-[33px] text-center">100%</div>
    </footer>
  );
}

const menus = ["File", "Edit", "View", "Insert", "Format", "Styles", "Sheet", "Data", "Tools", "Window", "Help"];

export default function App() {
  return (
    <div className="flex h-screen flex-col overflow-hidden bg-[#f6f5f4] font-['Noto_Sans',sans-serif] text-[#333]">
      <header className="shrink-0">
        <nav className="flex h-[17px] items-center border-b border-[#e4e2e0] text-[10px] leading-4">
          {menus.map((m) => (
            <button key={m} type="button" className="px-[5px]">
              {m}
            </button>
          ))}
          <button type="button" aria-label="Close Document" className="mr-2 ml-auto">
            <svg width="6" height="6" viewBox="0 0 6 6" stroke="#222" strokeWidth="1.5" aria-hidden="true">
              <path d="M.5.5l5 5M5.500.5l-5 5" />
            </svg>
          </button>
        </nav>
        <div role="toolbar" aria-label="Standard" className="flex h-[27px] items-center pl-0.5">
          <Toolbar groups={standardTools} />
        </div>
        <div role="toolbar" aria-label="Formatting" className="flex h-[27px] items-center pl-[3px]">
          <Combo label="Font Name" value="Calibri" inputClass="w-[113px] italic" />
          <span className="w-[5px]" />
          <Combo label="Font Size" value="14 pt" inputClass="w-[43px]" />
          <span className="flex w-[5px] justify-center">
            <span className="h-5 w-px bg-[#e4e2e0]" />
          </span>
          <Toolbar groups={formatTools} />
        </div>
      </header>
      <main className="flex min-h-0 flex-1">
        <div className="flex min-w-0 flex-1 flex-col">
          <FormulaBar />
          <div className="flex min-h-0 flex-1">
            <div className="min-w-0 flex-1 overflow-hidden bg-white">
              <Sheet />
            </div>
            <div className="flex w-[9px] shrink-0 flex-col items-center bg-[#cdcdcd] pt-[5px]">
              <div className="h-[48%] w-[5px] rounded-full bg-[#808280]" />
            </div>
          </div>
          <div className="flex h-[10px] shrink-0 items-center bg-[#cdcdcd] pl-0.5">
            <div className="h-1.5 w-[46%] rounded-full bg-[#808280]" />
            <div className="mr-[11px] ml-auto h-1.5 w-px bg-[#333]" />
          </div>
          <TabBar />
        </div>
        <Sidebar />
      </main>
      <StatusBar />
    </div>
  );
}
